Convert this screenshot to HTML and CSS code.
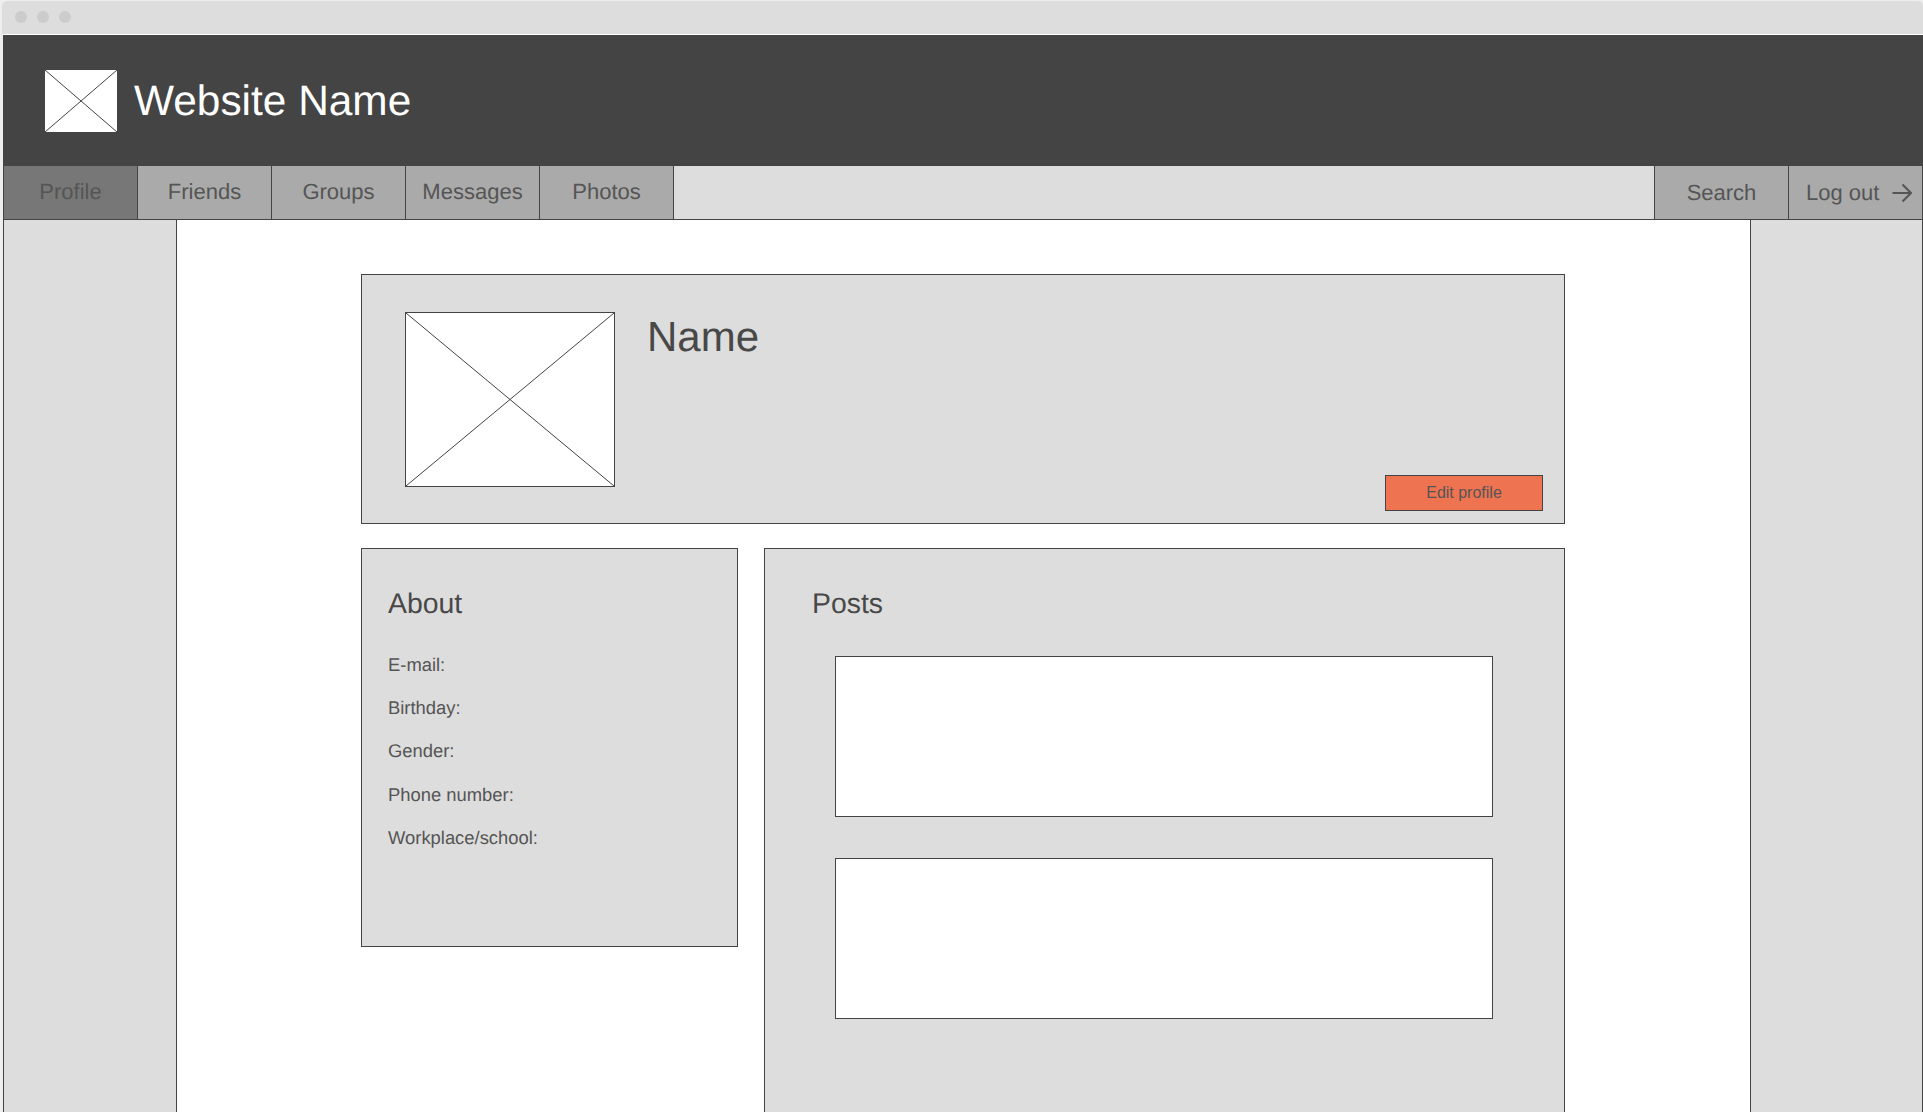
FILE: index.html

```html
<!DOCTYPE html>
<html lang="en">
<head>
  <meta charset="UTF-8">
  <title>Website Name</title>
  <link rel="stylesheet" href="styles.css">
</head>
<body>

  <div class="window">
    <div class="titlebar">
      <span class="dot"></span>
      <span class="dot"></span>
      <span class="dot"></span>
    </div>

    <header class="site-header">
      <svg class="placeholder logo" viewBox="0 0 72 62" preserveAspectRatio="none">
        <line x1="0" y1="0" x2="72" y2="62"></line>
        <line x1="72" y1="0" x2="0" y2="62"></line>
      </svg>
      <div class="site-name">Website Name</div>
    </header>

    <nav class="site-nav">
      <a class="tab active">Profile</a>
      <a class="tab">Friends</a>
      <a class="tab">Groups</a>
      <a class="tab">Messages</a>
      <a class="tab">Photos</a>
      <a class="tab tab-right">Search</a>
      <a class="tab tab-right logout">
        Log out
        <svg class="arrow" viewBox="0 0 20 20">
          <path d="M0.5 10H18.5M10.5 1.5L19 10L10.5 18.5"></path>
        </svg>
      </a>
    </nav>

    <div class="layout">
      <aside class="side side-left"></aside>

      <main class="content">
        <section class="profile-card">
          <svg class="placeholder profile-pic" viewBox="0 0 210 175" preserveAspectRatio="none">
            <line x1="0" y1="0" x2="210" y2="175"></line>
            <line x1="210" y1="0" x2="0" y2="175"></line>
          </svg>
          <h1 class="profile-name">Name</h1>
          <button type="button" class="edit-btn">Edit profile</button>
        </section>

        <div class="columns">
          <section class="about">
            <h2>About</h2>
            <div class="about-row">E-mail:</div>
            <div class="about-row">Birthday:</div>
            <div class="about-row">Gender:</div>
            <div class="about-row">Phone number:</div>
            <div class="about-row">Workplace/school:</div>
          </section>

          <section class="posts">
            <h2>Posts</h2>
            <div class="post"></div>
            <div class="post"></div>
          </section>
        </div>
      </main>

      <aside class="side side-right"></aside>
    </div>
  </div>

</body>
</html>
```

FILE: styles.css

```css
* {
  box-sizing: border-box;
}

html, body {
  margin: 0;
  height: 1112px;
  overflow: hidden;
  background-color: #eee;
}

body {
  font-family: "Liberation Sans", Arial, sans-serif;
  text-rendering: geometricPrecision;
  color: #484848;
  padding: 1px 0 0 2px;
}

.window {
  height: 1111px;
  display: flex;
  flex-direction: column;
}

.titlebar {
  height: 34px;
  flex: none;
  display: flex;
  align-items: center;
  gap: 10px;
  padding: 0 0 1px 13px;
  background-color: #ddd;
  border-bottom: 1px solid #fff;
  border-radius: 5px 5px 0 0;
}

.dot {
  width: 12px;
  height: 12px;
  border-radius: 50%;
  background-color: #ccc;
}

.site-header {
  height: 131px;
  flex: none;
  display: flex;
  align-items: center;
  gap: 17px;
  margin-left: 1px;
  padding-left: 42px;
  background-color: #444;
}

.placeholder {
  display: block;
  flex: none;
  background-color: #fff;
}

.placeholder line {
  stroke: #444;
  stroke-width: 1;
  vector-effect: non-scaling-stroke;
}

.logo {
  width: 72px;
  height: 62px;
}

.site-name {
  font-size: 42.4px;
  line-height: 48px;
  color: #fff;
}

.site-nav {
  height: 54px;
  flex: none;
  display: flex;
  margin-left: 1px;
  background-color: #ddd;
  border-left: 1px solid #444;
  border-bottom: 1px solid #444;
  border-right: 1px solid #444;
}

.tab {
  width: 134px;
  display: flex;
  align-items: center;
  justify-content: center;
  padding-bottom: 2px;
  font-size: 22px;
  color: #555;
  background-color: #aaa;
  border-right: 1px solid #444;
}

.tab.active {
  background-color: #777;
}

.tab-right {
  padding-bottom: 0;
  border-right: none;
  border-left: 1px solid #444;
}

.site-nav .tab-right:nth-child(6) {
  margin-left: auto;
}

.logout {
  justify-content: flex-start;
  gap: 13px;
  padding-left: 17px;
}

.arrow {
  width: 20px;
  height: 20px;
  fill: none;
  stroke: #555;
  stroke-width: 2;
}

.layout {
  flex: 1;
  display: flex;
  min-height: 0;
  margin-left: 1px;
  overflow: hidden;
}

.side {
  background-color: #ddd;
  flex: none;
}

.side-left {
  width: 174px;
  border-right: 1px solid #444;
  border-left: 1px solid #444;
}

.side-right {
  width: 173px;
  border-left: 1px solid #444;
  border-right: 1px solid #444;
}

.content {
  flex: 1;
  padding: 54px 185px 0 184px;
  background-color: #fff;
}

.profile-card {
  height: 250px;
  display: flex;
  padding: 37px 21px 12px 43px;
  background-color: #ddd;
  border: 1px solid #444;
}

.profile-pic {
  width: 210px;
  height: 175px;
  border: 1px solid #444;
}

.profile-name {
  flex: 1;
  margin: 1px 0 0 32px;
  font-size: 42px;
  line-height: 48px;
  font-weight: normal;
}

.edit-btn {
  width: 158px;
  height: 36px;
  align-self: flex-end;
  padding: 0;
  font-family: inherit;
  font-size: 16px;
  color: #555;
  background-color: #ee7350;
  border: 1px solid #444;
}

.columns {
  display: flex;
  align-items: flex-start;
  gap: 26px;
  margin-top: 24px;
}

.about, .posts {
  background-color: #ddd;
  border: 1px solid #444;
  padding-top: 39px;
}

.about {
  width: 377px;
  height: 399px;
  padding-left: 26px;
}

.posts {
  width: 801px;
  height: 700px;
  padding-left: 47px;
}

h2 {
  margin: 0 0 22.7px;
  font-size: 28.4px;
  line-height: 32px;
  font-weight: normal;
}

.about-row {
  font-size: 18.4px;
  line-height: 43.3px;
  color: #555;
}

.posts h2 {
  margin-bottom: 36px;
}

.post {
  width: 658px;
  height: 161px;
  margin: 0 0 41px 23px;
  background-color: #fff;
  border: 1px solid #444;
}
```
